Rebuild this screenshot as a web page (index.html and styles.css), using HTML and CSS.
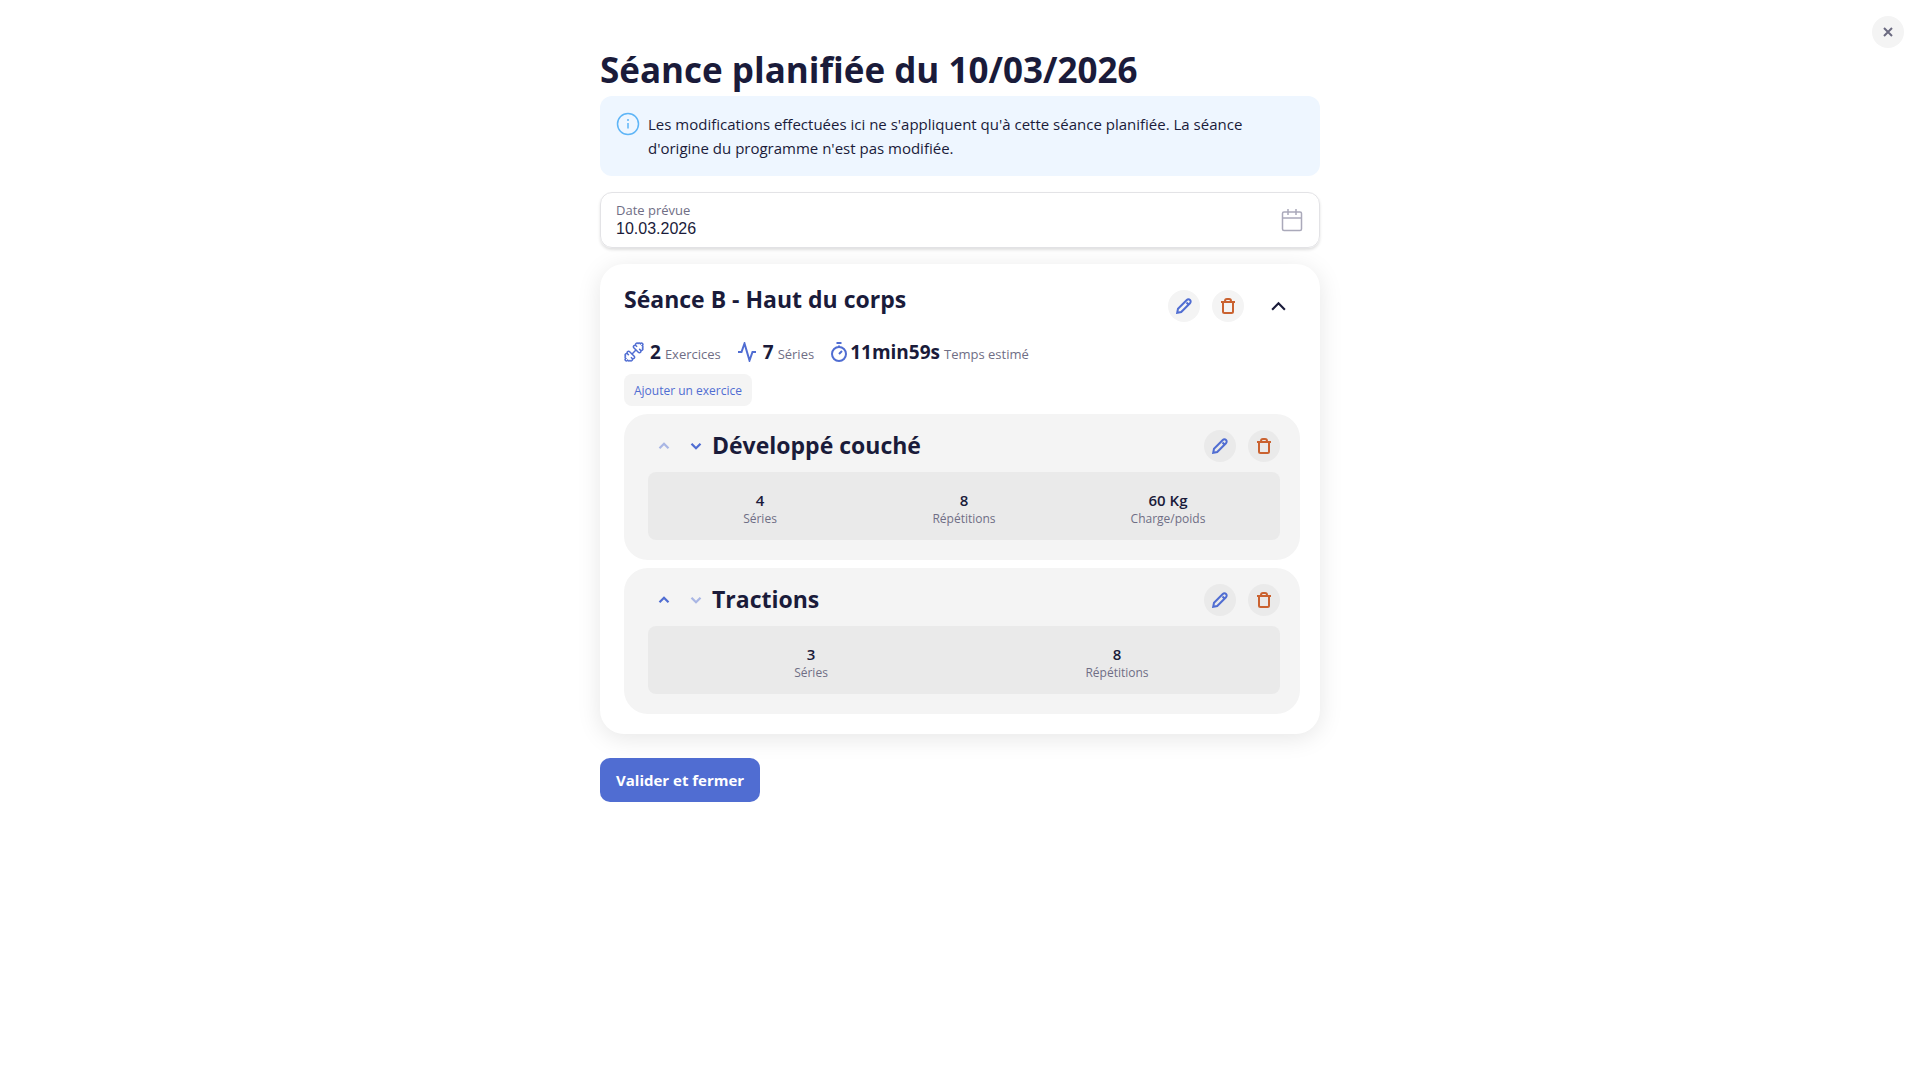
FILE: index.html
```html
<!DOCTYPE html>
<html lang="fr">
<head>
    <meta charset="UTF-8">
    <meta name="viewport" content="width=device-width, initial-scale=1.0">
    <title>Séance planifiée</title>
    <link rel="stylesheet" href="styles.css">
</head>
<body>
    <!-- Shared icons -->
    <svg class="sprite" aria-hidden="true">
        <symbol id="pencil" viewBox="0 0 16 16">
            <path d="M1.200 14.800l.8-4L10.800 2a2.260 2.260 0 0 1 3.200 3.200L5.200 14zM10.500 4.500l1.500 1.500"/>
        </symbol>
        <symbol id="trash" viewBox="0 0 16 16">
            <path d="M1 4h14M5 4V3a2 2 0 0 1 2-2h2a2 2 0 0 1 2 2v1M3 4v9.500A1.500 1.500 0 0 0 4.500 15h7a1.500 1.500 0 0 0 1.500-1.500V4"/>
        </symbol>
        <symbol id="up" viewBox="0 0 16 16"><path d="M2 11l6-6 6 6"/></symbol>
        <symbol id="down" viewBox="0 0 16 16"><path d="M2 5l6 6 6-6"/></symbol>
    </svg>

    <header class="topbar">
        <button class="round" type="button" aria-label="Fermer">
            <svg class="icon-close" viewBox="0 0 10 10"><path d="M1 1l8 8M9 1L1 9"/></svg>
        </button>
    </header>

    <main class="page">
        <h1>Séance planifiée du 10/03/2026</h1>

        <div class="notice">
            <svg class="icon-info" viewBox="0 0 24 24"><circle cx="12" cy="12" r="10.500"/><path d="M12 11v5.500M12 7v2"/></svg>
            <p>Les modifications effectuées ici ne s'appliquent qu'à cette séance planifiée. La séance d'origine du programme n'est pas modifiée.</p>
        </div>

        <div class="field">
            <div class="field-text">
                <label for="date">Date prévue</label>
                <input id="date" type="text" value="10.03.2026">
            </div>
            <svg class="icon-calendar" viewBox="0 0 24 24"><rect x="2.500" y="4" width="19" height="18.500" rx="1.500"/><path d="M2.500 10h19M8 1v6M16 1v6"/></svg>
        </div>

        <section class="card">
            <div class="card-head">
                <h2>Séance B - Haut du corps</h2>
                <div class="actions">
                    <button class="round edit" type="button" aria-label="Modifier"><svg><use href="#pencil"/></svg></button>
                    <button class="round delete" type="button" aria-label="Supprimer"><svg><use href="#trash"/></svg></button>
                    <button class="toggle" type="button" aria-label="Replier"><svg><use href="#up"/></svg></button>
                </div>
            </div>

            <ul class="stats">
                <li>
                    <svg class="icon-dumbbell" viewBox="0 0 20 20">
                        <path d="M7.800 12.200l4.400-4.400"/>
                        <path d="M3.500 9.800a1.500 1.500 0 0 1 2.200 0l4.500 4.500a1.500 1.500 0 0 1-2 2.200 1.500 1.500 0 0 1-2.200 2 1.500 1.500 0 0 1-2.400-.3l-.3.3a1.100 1.100 0 0 1-1.800-1.800l.3-.3a1.500 1.500 0 0 1-.3-2.400 1.500 1.500 0 0 1 2-2.200 1.500 1.500 0 0 1 0-2zM3.500 11.800l1.300 1.300M6.900 15.200l1.300 1.300"/>
                        <path d="M16.500 10.200a1.500 1.500 0 0 1-2.200 0L9.800 5.700a1.500 1.500 0 0 1 2-2.200 1.500 1.500 0 0 1 2.200-2 1.500 1.500 0 0 1 2.400.3l.3-.3a1.100 1.100 0 0 1 1.800 1.800l-.3.3a1.500 1.500 0 0 1 .3 2.400 1.500 1.500 0 0 1-2 2.200 1.500 1.500 0 0 1 0 2zM16.500 8.200l-1.300-1.300M13.100 4.800l-1.300-1.300"/>
                    </svg>
                    <strong>2</strong> <span>Exercices</span>
                </li>
                <li>
                    <svg viewBox="0 0 20 20"><path d="M1 10h3.500L7.500 1.500l5 17L15.500 10H19"/></svg>
                    <strong>7</strong> <span>Séries</span>
                </li>
                <li class="time">
                    <svg viewBox="0 0 20 20"><circle cx="9" cy="12" r="7"/><path d="M9 12l3-3M6.500 1h5M9 3.500v1.500"/></svg>
                    <strong>11min59s</strong> <span>Temps estimé</span>
                </li>
            </ul>

            <button class="add" type="button">Ajouter un exercice</button>

            <article class="exercise">
                <div class="exercise-head">
                    <button class="move" type="button" aria-label="Monter" disabled><svg><use href="#up"/></svg></button>
                    <button class="move" type="button" aria-label="Descendre"><svg><use href="#down"/></svg></button>
                    <h2>Développé couché</h2>
                    <div class="actions">
                        <button class="round edit" type="button" aria-label="Modifier"><svg><use href="#pencil"/></svg></button>
                        <button class="round delete" type="button" aria-label="Supprimer"><svg><use href="#trash"/></svg></button>
                    </div>
                </div>
                <dl class="details">
                    <div><dd>4</dd><dt>Séries</dt></div>
                    <div><dd>8</dd><dt>Répétitions</dt></div>
                    <div><dd>60 Kg</dd><dt>Charge/poids</dt></div>
                </dl>
            </article>

            <article class="exercise">
                <div class="exercise-head">
                    <button class="move" type="button" aria-label="Monter"><svg><use href="#up"/></svg></button>
                    <button class="move" type="button" aria-label="Descendre" disabled><svg><use href="#down"/></svg></button>
                    <h2>Tractions</h2>
                    <div class="actions">
                        <button class="round edit" type="button" aria-label="Modifier"><svg><use href="#pencil"/></svg></button>
                        <button class="round delete" type="button" aria-label="Supprimer"><svg><use href="#trash"/></svg></button>
                    </div>
                </div>
                <dl class="details">
                    <div><dd>3</dd><dt>Séries</dt></div>
                    <div><dd>8</dd><dt>Répétitions</dt></div>
                </dl>
            </article>
        </section>

        <button class="submit" type="button">Valider et fermer</button>
    </main>
</body>
</html>
```
FILE: styles.css
```css
* { box-sizing: border-box; }
body { margin: 0; background: #fff; color: #1a1b3a; font-family: "Open Sans", "Noto Sans", sans-serif; font-size: 15px; line-height: 24px; }
h1, h2, p, ul, dl, dd { margin: 0; padding: 0; }
button { border: 0; padding: 0; background: none; color: inherit; font-family: inherit; cursor: pointer; }
svg { display: block; fill: none; stroke: currentColor; stroke-width: 2; }
.sprite { display: none; }

.topbar { display: flex; justify-content: flex-end; height: 48px; padding: 16px 16px 0; }
.round { display: flex; align-items: center; justify-content: center; width: 32px; height: 32px; border-radius: 50%; background: #f4f4f4; }
.round svg { width: 16px; height: 16px; }
.topbar .round { color: #6b6a80; }
.round .icon-close { width: 10px; height: 10px; }

.page { max-width: 720px; margin: 0 auto; }
h1 { padding-bottom: 4px; font-size: 35px; line-height: 44px; font-weight: 700; }

.notice { display: flex; gap: 8px; padding: 16px; border-radius: 12px; background: #eef6ff; }
.notice p { flex: 1; padding-right: 16px; }
.icon-info { width: 24px; height: 24px; color: #5eb5f7; stroke-width: 1.5; }

.field { display: flex; align-items: center; justify-content: space-between; height: 56px; margin-top: 16px; padding: 0 15px; border: 1px solid #e3e3e6; border-radius: 12px; box-shadow: 0 2px 3px rgba(0, 0, 0, .12); }
.field-text { display: flex; flex: 1; flex-direction: column; }
.field label { color: #6f6e85; font-size: 13px; line-height: 18px; }
.field input { padding: 0; border: 0; outline: 0; background: none; color: inherit; font: 16px/20px "Liberation Sans", Arial, sans-serif; }
.icon-calendar { width: 24px; height: 24px; color: #aaa9ba; stroke-width: 1.5; }

.card { margin-top: 16px; padding: 24px 20px 20px 24px; border-radius: 24px; background: #fff; box-shadow: 0 4px 24px rgba(0, 0, 0, .1); }
.card-head { display: flex; justify-content: space-between; height: 48px; }
h2 { padding-bottom: 2px; font-size: 23px; line-height: 22px; font-weight: 700; }
.actions { display: flex; gap: 12px; margin-left: auto; }
.card-head .actions { padding: 2px 6px 0 0; }
.edit { color: #506dd2; }
.delete { color: #ca6230; }
.toggle { display: flex; align-items: center; justify-content: center; width: 32px; height: 32px; margin-left: 6px; }
.toggle svg { width: 17px; height: 17px; }

.stats { display: flex; gap: 16px; height: 32px; list-style: none; }
.stats li { display: flex; align-items: baseline; gap: 4px; }
.stats svg { width: 20px; height: 20px; margin-right: 2px; align-self: center; color: #506dd2; }
.stats .icon-dumbbell { stroke-width: 1.5; }
.stats strong { font-size: 19px; line-height: 32px; }
.stats span { color: #6f6e85; font-size: 13px; }
.stats .time svg { margin-right: -4px; }

.add { display: block; height: 32px; margin-top: 6px; padding: 0 10px; border-radius: 8px; background: #f4f4f4; color: #506dd2; font-size: 12px; }

.exercise { margin-top: 8px; padding: 16px 20px 20px 24px; border-radius: 24px; background: #f4f4f4; }
.exercise-head { display: flex; align-items: center; margin-bottom: 10px; }
.exercise .round { background: #eaeaea; }
.move { display: flex; align-items: center; justify-content: center; width: 32px; height: 32px; color: #506dd2; }
.move svg { width: 12px; height: 12px; stroke-width: 3; }
.move:disabled { opacity: .45; }
.details { display: flex; padding: 17px 10px 13px; border-radius: 8px; background: #eaeaea; text-align: center; }
.details div { display: flex; flex: 1; flex-direction: column; }
.details dd { font-size: 15px; line-height: 22px; font-weight: 600; }
.details dt { color: #6f6e85; font-size: 12px; line-height: 16px; }

.submit { height: 44px; margin-top: 24px; padding: 0 16px; border-radius: 10px; background: #506dd2; color: #fff; font-size: 15px; font-weight: 700; }
```
